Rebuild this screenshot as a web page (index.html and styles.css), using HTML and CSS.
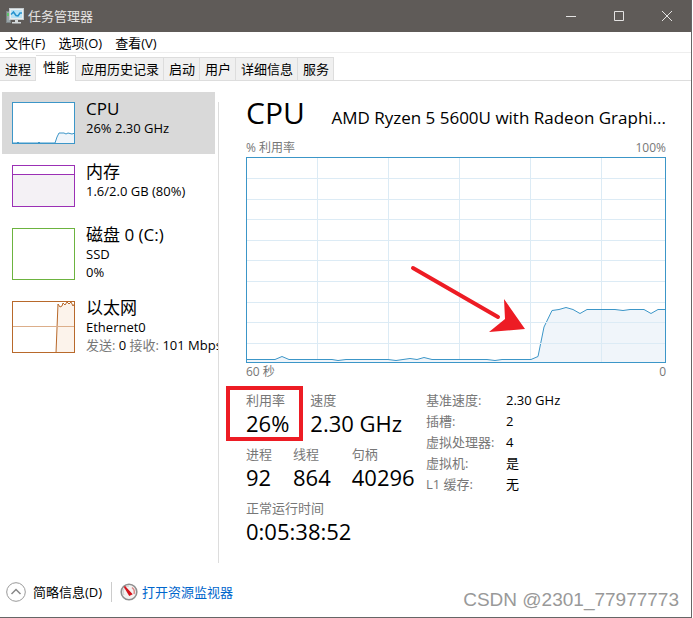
FILE: index.html
```html
<!DOCTYPE html>
<html lang="zh-CN">
<head>
    <meta charset="UTF-8">
    <meta name="viewport" content="width=device-width, initial-scale=1.0">
    <title>任务管理器</title>
    <link rel="stylesheet" href="styles.css">
</head>
<body>

    <div class="window">
        <header class="title-bar">
            <svg class="app-icon" width="18" height="16" viewBox="0 0 18 16">
                <rect x="0.5" y="3.5" width="4" height="11" fill="#9aa5a8" stroke="#7d8587"/>
                <rect x="1" y="5" width="2" height="3" fill="#5fc46a"/>
                <rect x="3.5" y="0.5" width="14" height="11" fill="#e9eef0" stroke="#c3cbce"/>
                <rect x="5" y="2" width="11" height="8" fill="#b9e3f5"/>
                <path d="M5 6.5 L7.5 4 L10 7.5 L12 8 L14 5 L16 5" fill="none" stroke="#2793cf" stroke-width="1.5"/>
                <path d="M9 12h3v2h3v1.5H6V14h3z" fill="#d5dadc"/>
            </svg>
            <span class="title">任务管理器</span>
            <div class="window-buttons">
                <button type="button" aria-label="最小化">
                    <svg width="12" height="12" viewBox="0 0 12 12"><path d="M1 6.5h10"/></svg>
                </button>
                <button type="button" aria-label="最大化">
                    <svg width="12" height="12" viewBox="0 0 12 12"><path d="M1.5 1.5h9v9h-9z"/></svg>
                </button>
                <button type="button" aria-label="关闭">
                    <svg width="12" height="12" viewBox="0 0 12 12"><path d="M1 1l10 10M11 1L1 11"/></svg>
                </button>
            </div>
        </header>

        <nav class="menu-bar">
            <button type="button">文件(F)</button>
            <button type="button">选项(O)</button>
            <button type="button">查看(V)</button>
        </nav>

        <div class="tabs" role="tablist">
            <button type="button" role="tab">进程</button>
            <button type="button" role="tab" class="active" aria-selected="true">性能</button>
            <button type="button" role="tab">应用历史记录</button>
            <button type="button" role="tab">启动</button>
            <button type="button" role="tab">用户</button>
            <button type="button" role="tab">详细信息</button>
            <button type="button" role="tab">服务</button>
        </div>

        <div class="content">
            <aside class="sidebar">
                <button type="button" class="device selected">
                    <svg class="thumb cpu" viewBox="0 0 63 42">
                        <path class="area" d="M0 41H5L6 40L7 41H26L27 40L28 41H43L45 35L47 31L52 31L54 32L56 31L60 32L63 31V42H0z"/>
                        <rect class="frame" x="0.5" y="0.5" width="62" height="41"/>
                    </svg>
                    <span class="device-text">
                        <span class="device-name">CPU</span>
                        <span>26% 2.30 GHz</span>
                    </span>
                </button>
                <button type="button" class="device">
                    <svg class="thumb memory" viewBox="0 0 63 42">
                        <path class="area" d="M0 9.5H63V42H0z"/>
                        <rect class="frame" x="0.5" y="0.5" width="62" height="41"/>
                    </svg>
                    <span class="device-text">
                        <span class="device-name">内存</span>
                        <span>1.6/2.0 GB (80%)</span>
                    </span>
                </button>
                <button type="button" class="device">
                    <svg class="thumb disk" viewBox="0 0 63 52">
                        <rect class="frame" x="0.5" y="0.5" width="62" height="51"/>
                    </svg>
                    <span class="device-text">
                        <span class="device-name">磁盘 0 (C:)</span>
                        <span>SSD</span>
                        <span>0%</span>
                    </span>
                </button>
                <button type="button" class="device">
                    <svg class="thumb network" viewBox="0 0 63 52">
                        <path class="area" d="M44 52L45 27L46 3L48 6L50 5L51 2L53 4L55 1L57 3L59 1L61 5L63 2V52z"/>
                        <path class="middle" d="M0 25.5H63"/>
                        <rect class="frame" x="0.5" y="0.5" width="62" height="51"/>
                    </svg>
                    <span class="device-text">
                        <span class="device-name">以太网</span>
                        <span>Ethernet0</span>
                        <span><i>发送:</i> 0 <i>接收:</i> 101 Mbps</span>
                    </span>
                </button>
            </aside>

            <main class="details">
                <div class="heading">
                    <h1>CPU</h1>
                    <span class="model">AMD Ryzen 5 5600U with Radeon Graphi...</span>
                </div>

                <div class="chart-labels">
                    <span>% 利用率</span>
                    <span>100%</span>
                </div>
                <div class="chart">
                    <svg class="graph" viewBox="0 0 420 206" preserveAspectRatio="none">
                        <path class="grid" d="M71.5 0V206M142.5 0V206M213.5 0V206M284.5 0V206M355.5 0V206"/>
                        <path class="grid" d="M0 21.5H420M0 42.5H420M0 62.5H420M0 83.5H420M0 103.5H420M0 124.5H420M0 145.5H420M0 165.5H420M0 186.5H420"/>
                        <path class="area" d="M0 202.5H29L36 199.5L43 202.5H86L92 203.5L100 202.5H142L150 203.5L164 201.5L171 202.5L178 200.5L186 202.5H241L249 203.5L256 202.5H285L292 199.5L298 170L306 153.5L313 152.5L320 150.5L327 152.5L334 156.5L341 152.5H369L377 153.5L384 152.5H398L405 156.5L412 152.5H420V206H0z"/>
                        <path class="grid faint" d="M355.5 153V206M292 186.5H420M298 165.5H420"/>
                        <rect class="frame" x="0.5" y="0.5" width="419" height="205"/>
                    </svg>
                    <svg class="arrow" width="116" height="68" viewBox="0 0 116 68">
                        <path d="M3 3L88 52" fill="none" stroke="#ed1c24" stroke-width="4" stroke-linecap="round"/>
                        <path d="M94 34L115 64L79 67L95 54z" fill="#ed1c24"/>
                    </svg>
                </div>
                <div class="chart-labels">
                    <span>60 秒</span>
                    <span>0</span>
                </div>

                <div class="stats">
                    <div class="stats-live">
                        <dl class="row">
                            <div class="stat marked"><dt>利用率</dt><dd>26%</dd></div>
                            <div class="stat"><dt>速度</dt><dd>2.30 GHz</dd></div>
                        </dl>
                        <dl class="row">
                            <div class="stat"><dt>进程</dt><dd>92</dd></div>
                            <div class="stat"><dt>线程</dt><dd>864</dd></div>
                            <div class="stat"><dt>句柄</dt><dd>40296</dd></div>
                        </dl>
                        <dl class="row">
                            <div class="stat"><dt>正常运行时间</dt><dd>0:05:38:52</dd></div>
                        </dl>
                    </div>
                    <dl class="stats-static">
                        <dt>基准速度:</dt><dd>2.30 GHz</dd>
                        <dt>插槽:</dt><dd>2</dd>
                        <dt>虚拟处理器:</dt><dd>4</dd>
                        <dt>虚拟机:</dt><dd>是</dd>
                        <dt>L1 缓存:</dt><dd>无</dd>
                    </dl>
                </div>
            </main>
        </div>

        <footer class="status-bar">
            <button type="button" class="fewer">
                <svg width="20" height="20" viewBox="0 0 20 20">
                    <circle cx="10" cy="10" r="9.3" fill="#fff" stroke="#999"/>
                    <path d="M5.5 12L10 7.5L14.5 12" fill="none" stroke="#888" stroke-width="1.5"/>
                </svg>
                <span>简略信息(D)</span>
            </button>
            <a class="monitor" href="#">
                <svg width="18" height="18" viewBox="0 0 18 18">
                    <circle cx="9" cy="9" r="7.8" fill="#f4f2f1" stroke="#8e8e8e" stroke-width="1.6"/>
                    <path d="M4 12A6 6 0 0 1 9 3" fill="none" stroke="#c9c9c9"/>
                    <path d="M12 4.5A6 6 0 0 1 14 11" fill="none" stroke="#d88" stroke-width="1.5"/>
                    <path d="M4.5 3.5L11.5 11L9.5 12z" fill="#d5141c" stroke="#d5141c" stroke-width="1.5"/>
                </svg>
                <span>打开资源监视器</span>
            </a>
        </footer>

        <div class="watermark">CSDN @2301_77977773</div>
    </div>

</body>
</html>
```

FILE: styles.css
```css
* {
    box-sizing: border-box;
}

body {
    margin: 0;
    padding-right: 1px;
    font-family: "Open Sans", "Noto Sans CJK SC", sans-serif;
    font-size: 13px;
    line-height: 18px;
    color: #000;
    background-color: #fff;
}

button {
    font: inherit;
    color: inherit;
    background: none;
    border: none;
    padding: 0;
    margin: 0;
}

dl, dt, dd, h1 {
    margin: 0;
    font-weight: normal;
}

.window {
    position: relative;
    display: flex;
    flex-direction: column;
    min-height: 100vh;
    border-right: 1px solid #666;
    border-bottom: 1px solid #666;
}

/* title bar */
.title-bar {
    display: flex;
    align-items: center;
    height: 32px;
    padding-left: 6px;
    gap: 4px;
    background-color: #5f5b58;
    color: #e4e3e2;
}

.window-buttons {
    display: flex;
    margin-left: auto;
}

.window-buttons button {
    display: flex;
    align-items: center;
    justify-content: center;
    width: 48px;
    height: 32px;
}

.window-buttons path {
    fill: none;
    stroke: #e4e3e2;
}

/* menu and tabs */
.menu-bar {
    display: flex;
    gap: 13px;
    height: 21px;
    padding: 2px 5px;
    border-bottom: 1px solid #eee;
}

.tabs {
    display: flex;
    align-items: flex-end;
    height: 28px;
    border-bottom: 1px solid #ddd;
}

.tabs button {
    height: 23px;
    padding: 0 4px 0 5px;
    background-color: #f0f0f0;
    border: 1px solid #ddd;
    border-left: none;
    border-bottom: none;
}

.tabs .active {
    height: 26px;
    padding: 0 6px 3px 7px;
    margin-bottom: -1px;
    background-color: #fff;
}

.content {
    display: flex;
    flex: 1;
    padding-top: 11px;
}

/* device list */
.sidebar {
    position: relative;
    flex: none;
    width: 219px;
    padding-left: 2px;
    overflow: hidden;
}

.sidebar::after {
    content: "";
    position: absolute;
    top: 10px;
    right: 0;
    bottom: 0;
    width: 1px;
    background-color: #ddd;
}

.device {
    display: flex;
    align-items: flex-start;
    gap: 11px;
    width: 213px;
    padding: 10px;
    text-align: left;
    white-space: nowrap;
}

.device + .device {
    margin-top: 1px;
}

.selected {
    background-color: #d9d9d9;
}

.thumb {
    flex: none;
    width: 63px;
    background-color: #fff;
}

.device-text {
    display: flex;
    flex-direction: column;
    margin: -4px 0;
}

.device-text i {
    font-style: normal;
    color: #777;
}

.device-name {
    font-size: 17px;
    line-height: 21px;
}

.frame {
    fill: none;
    stroke: #3c96c8;
}

.area {
    fill: #f0f5fa;
    stroke: #3c96c8;
}

.memory .frame, .memory .area {
    stroke: #9b30b5;
}

.memory .area {
    fill: #f4f1f5;
}

.disk .frame {
    stroke: #6cb33f;
}

.network .frame, .network .area {
    stroke: #b8692b;
}

.network .area {
    fill: #fcf3eb;
}

.middle {
    stroke: #dcae8a;
}

/* details */
.details {
    flex: 1;
    min-width: 0;
    padding: 0 25px 0 27px;
}

.heading {
    display: flex;
    align-items: baseline;
    justify-content: space-between;
    line-height: 42px;
}

.heading h1 {
    font-size: 30px;
}

.model {
    font-size: 17px;
}

.chart-labels {
    display: flex;
    justify-content: space-between;
    font-size: 12px;
    color: #777;
}

.chart {
    position: relative;
}

.graph {
    display: block;
    width: 100%;
    height: 206px;
}

.grid {
    fill: none;
    stroke: #dcebf5;
}

.arrow {
    position: absolute;
    right: 140px;
    top: 108px;
}

.stats {
    display: flex;
    padding-top: 10px;
}

.stats-live {
    width: 180px;
}

.row {
    display: flex;
    align-items: flex-start;
    gap: 21px;
    height: 54px;
    white-space: nowrap;
}

.stat dt, .stats-static dt {
    color: #777;
}

.stat dd {
    font-size: 22px;
    line-height: 28px;
}

.marked {
    position: relative;
}

.marked::after {
    content: "";
    position: absolute;
    inset: -5px -14px -4px -20px;
    border: 4px solid #ed1c24;
}

.stats-static {
    display: grid;
    grid-template-columns: 80px auto;
    grid-auto-rows: 21px;
}

/* bottom bar */
.status-bar {
    display: flex;
    align-items: center;
    height: 54px;
    padding: 4px 0 0 6px;
}

.fewer, .monitor {
    display: flex;
    align-items: center;
}

.fewer {
    gap: 7px;
    padding-right: 9px;
    border-right: 1px solid #ccc;
}

.monitor {
    gap: 4px;
    padding-left: 8px;
    color: #0066cc;
    text-decoration: none;
}

.watermark {
    position: absolute;
    right: 12px;
    bottom: 7px;
    font-family: "Liberation Sans", sans-serif;
    font-size: 19px;
    line-height: 20px;
    color: #999;
}
```
